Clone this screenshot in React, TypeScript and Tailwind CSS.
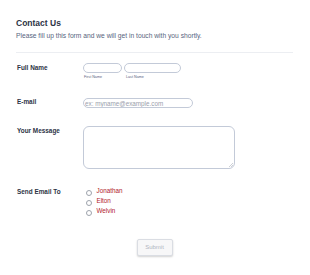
export default function App() {
  const people = ['Jonathan', 'Elton', 'Welvin'];

  return (
    <div className="w-[310px] h-[275px] bg-white font-['Liberation_Sans',Arial,sans-serif] text-[#2c3345]">
      <div className="px-[16px] pt-[18px]">
        {/* Header */}
        <h1 className="text-[8.5px] leading-[11px] font-bold text-[#2c3345]">Contact Us</h1>
        <p className="mt-[3px] text-[6.7px] leading-[8px] text-[#57647e]">
          Please fill up this form and we will get in touch with you shortly.
        </p>
        <div className="mt-[12px] h-px w-[277px] bg-[#eceef2]" />

        {/* Full name */}
        <div className="mt-[10px] flex">
          <label className="w-[67px] pt-[1px] pl-[1px] text-[6.4px] leading-[8px] font-bold">Full Name</label>
          <div className="flex gap-[2px]">
            <div className="flex flex-col">
              <input className="h-[10px] w-[39px] rounded-full border border-[#c3cad8] bg-white" />
              <span className="mt-[2px] pl-[1px] text-[3.7px] leading-[5px] text-[#57647e]">First Name</span>
            </div>
            <div className="flex flex-col">
              <input className="h-[10px] w-[57px] rounded-full border border-[#c3cad8] bg-white" />
              <span className="mt-[2px] pl-[2px] text-[3.7px] leading-[5px] text-[#57647e]">Last Name</span>
            </div>
          </div>
        </div>

        {/* Email */}
        <div className="mt-[18px] flex">
          <label className="w-[67px] pl-[1px] text-[6.4px] leading-[8px] font-bold">E-mail</label>
          <input
            placeholder="ex: myname@example.com"
            className="h-[10px] w-[110px] rounded-full border border-[#c3cad8] bg-white px-[1px] text-[6.3px] leading-[8px] placeholder:text-[#9aa0ab]"
          />
        </div>

        {/* Message */}
        <div className="mt-[18px] flex">
          <label className="w-[67px] pt-[1px] pl-[1px] text-[6.4px] leading-[8px] font-bold">Your Message</label>
          <div className="relative">
            <textarea className="block h-[43px] w-[152px] resize-none rounded-[6px] border border-[#c3cad8] bg-white" />
            <svg className="absolute bottom-[2px] right-[2px] h-[4px] w-[4px]" viewBox="0 0 4 4">
              <path d="M4 0L0 4M4 2L2 4" stroke="#b8bcc4" strokeWidth="0.7" />
            </svg>
          </div>
        </div>

        {/* Send to */}
        <div className="mt-[18px] flex">
          <label className="w-[67px] pt-[1px] pl-[1px] text-[6.4px] leading-[8px] font-bold">Send Email To</label>
          <div className="flex flex-col pl-[3px]">
            {people.map((name) => (
              <label key={name} className="flex h-[10px] items-start gap-[5px]">
                <span className="mt-[3px] h-[5.5px] w-[5.5px] rounded-full border border-[#9ea3ac] bg-white" />
                <span className="text-[6.3px] leading-[8px] text-[#b1202a]">{name}</span>
              </label>
            ))}
          </div>
        </div>

        {/* Submit */}
        <div className="mt-[22px] flex justify-center pr-[1px]">
          <button className="h-[17px] w-[36px] rounded-[2px] border border-[#dadde3] bg-[#f7f7f8] text-[6px] text-[#b0b5bf] shadow-[0_1px_2px_rgba(0,0,0,0.18)]">
            Submit
          </button>
        </div>
      </div>
    </div>
  );
}
